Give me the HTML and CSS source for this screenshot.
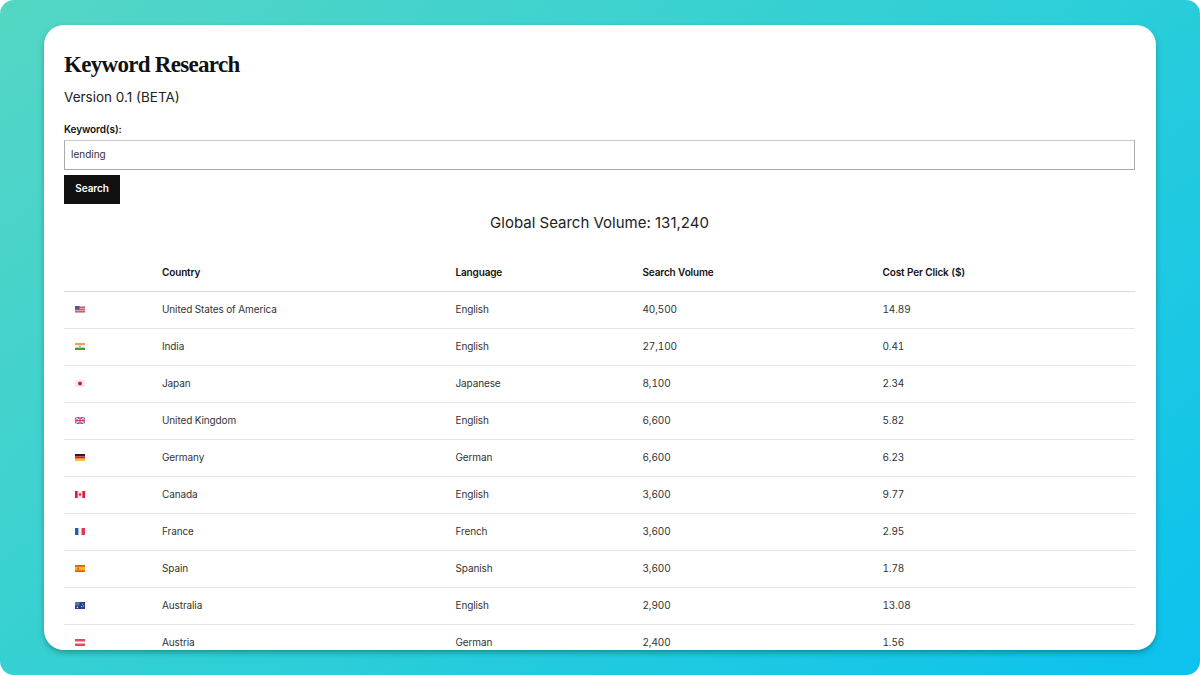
FILE: index.html
```html
<!DOCTYPE html>
<html lang="en">
<head>
    <meta charset="UTF-8">
    <meta name="viewport" content="width=device-width, initial-scale=1.0">
    <title>Keyword Research</title>
    <link rel="stylesheet" href="styles.css">
</head>
<body>
    <div class="frame">
        <main class="card">
            <h1 class="title">Keyword Research</h1>
            <p class="version">Version 0.1 (BETA)</p>
            <label class="field-label" for="keywords">Keyword(s):</label>
            <input class="field" id="keywords" type="text" value="lending">
            <button class="search">Search</button>
            <h2 class="total">Global Search Volume: 131,240</h2>
            <table class="results">
                <thead>
                    <tr>
                        <th class="col-flag"></th>
                        <th class="col-country">Country</th>
                        <th class="col-language">Language</th>
                        <th class="col-volume">Search Volume</th>
                        <th>Cost Per Click ($)</th>
                    </tr>
                </thead>
                <tbody>
                    <tr>
                        <td><svg class="flag" viewBox="0 0 10 7"><rect width="10" height="7" fill="#e8a0ac"/><path d="M0 1.5h10M0 3.5h10M0 5.5h10" stroke="#d9506a" stroke-width=".9"/><rect width="4.5" height="3.5" fill="#4a5a9c"/></svg></td>
                        <td>United States of America</td><td>English</td><td>40,500</td><td>14.89</td>
                    </tr>
                    <tr>
                        <td><svg class="flag" viewBox="0 0 10 7"><rect width="10" height="2.4" fill="#f0a050"/><rect y="2.4" width="10" height="2.3" fill="#f4f0ea"/><rect y="4.7" width="10" height="2.3" fill="#3f9a3f"/><circle cx="5" cy="3.5" r=".8" fill="#7c7ca8"/></svg></td>
                        <td>India</td><td>English</td><td>27,100</td><td>0.41</td>
                    </tr>
                    <tr>
                        <td><svg class="flag" viewBox="0 0 10 7"><rect width="10" height="7" fill="#f8e6ea"/><circle cx="5" cy="3.5" r="1.9" fill="#c4144a"/></svg></td>
                        <td>Japan</td><td>Japanese</td><td>8,100</td><td>2.34</td>
                    </tr>
                    <tr>
                        <td><svg class="flag" viewBox="0 0 10 7"><rect width="10" height="7" fill="#4a5590"/><path d="M0 0l10 7M10 0L0 7" stroke="#efdde2" stroke-width="1.3"/><path d="M5 0v7M0 3.5h10" stroke="#efdde2" stroke-width="2.2"/><path d="M5 0v7M0 3.5h10" stroke="#d03a5c" stroke-width="1.2"/></svg></td>
                        <td>United Kingdom</td><td>English</td><td>6,600</td><td>5.82</td>
                    </tr>
                    <tr>
                        <td><svg class="flag" viewBox="0 0 10 7"><rect width="10" height="2.4" fill="#222"/><rect y="2.4" width="10" height="2.3" fill="#d8261c"/><rect y="4.7" width="10" height="2.3" fill="#f6c21c"/></svg></td>
                        <td>Germany</td><td>German</td><td>6,600</td><td>6.23</td>
                    </tr>
                    <tr>
                        <td><svg class="flag" viewBox="0 0 10 7"><rect width="10" height="7" fill="#f8e4e6"/><rect width="2.6" height="7" fill="#dc1a3a"/><rect x="7.4" width="2.6" height="7" fill="#dc1a3a"/><circle cx="5" cy="3.5" r="1.2" fill="#dc1a3a"/></svg></td>
                        <td>Canada</td><td>English</td><td>3,600</td><td>9.77</td>
                    </tr>
                    <tr>
                        <td><svg class="flag" viewBox="0 0 10 7"><rect width="10" height="7" fill="#f6f0f2"/><rect width="3.4" height="7" fill="#2a5ca8"/><rect x="6.6" width="3.4" height="7" fill="#e23a4c"/></svg></td>
                        <td>France</td><td>French</td><td>3,600</td><td>2.95</td>
                    </tr>
                    <tr>
                        <td><svg class="flag" viewBox="0 0 10 7"><rect width="10" height="7" fill="#d8641c"/><rect y="1.8" width="10" height="3.4" fill="#f2b820"/><rect x="2.4" y="2.6" width="1.6" height="1.8" fill="#b85a20"/></svg></td>
                        <td>Spain</td><td>Spanish</td><td>3,600</td><td>1.78</td>
                    </tr>
                    <tr>
                        <td><svg class="flag" viewBox="0 0 10 7"><rect width="10" height="7" fill="#23408e"/><rect width="4.5" height="3.5" fill="#6a6ea8"/><circle cx="7.5" cy="2" r=".6" fill="#e8ecf6"/><circle cx="8.5" cy="4" r=".6" fill="#e8ecf6"/><circle cx="6.6" cy="4.6" r=".6" fill="#e8ecf6"/><circle cx="2.4" cy="5.3" r=".8" fill="#e8ecf6"/></svg></td>
                        <td>Australia</td><td>English</td><td>2,900</td><td>13.08</td>
                    </tr>
                    <tr>
                        <td><svg class="flag" viewBox="0 0 10 7"><rect width="10" height="7" fill="#e0485c"/><rect y="2.4" width="10" height="2.2" fill="#f8eef0"/></svg></td>
                        <td>Austria</td><td>German</td><td>2,400</td><td>1.56</td>
                    </tr>
                </tbody>
            </table>
        </main>
    </div>
</body>
</html>
```

FILE: styles.css
```css
* {
    margin: 0;
    padding: 0;
    box-sizing: border-box;
}

body {
    background-color: #fff;
    font-family: "Inter", "Liberation Sans", sans-serif;
    color: #111;
}

.frame {
    width: 1200px;
    height: 675px;
    padding: 25px 44px;
    border-radius: 14px;
    overflow: hidden;
    background: linear-gradient(140deg, #55d6c4 0%, #2fcfd6 50%, #0bc2ee 100%);
}

.card {
    height: 625px;
    padding: 25px 21px 0 20px;
    overflow: hidden;
    background-color: #fff;
    border-radius: 20px;
    box-shadow: 0 3px 6px -1px rgba(0, 0, 0, 0.35);
}

.title {
    font-family: "Liberation Serif", serif;
    font-size: 23px;
    line-height: 30px;
    font-weight: bold;
    letter-spacing: -0.7px;
}

.version {
    margin-top: 7px;
    font-size: 13.5px;
    line-height: 20px;
    color: #222;
}

.field-label {
    display: block;
    margin-top: 15px;
    font-size: 10px;
    line-height: 14px;
    font-weight: 600;
    letter-spacing: -0.1px;
}

.field {
    display: block;
    width: 100%;
    height: 30px;
    margin-top: 4px;
    padding: 0 6px 2px;
    border: 1px solid #aaa;
    border-top-color: #c8c8c8;
    font-family: inherit;
    font-size: 10px;
    color: #333;
}

.search {
    display: block;
    width: 56px;
    height: 29px;
    margin-top: 5px;
    padding-bottom: 3px;
    border: none;
    background-color: #111;
    color: #fff;
    font-family: inherit;
    font-size: 10px;
    font-weight: 600;
    letter-spacing: -0.1px;
}

.total {
    margin-top: 9px;
    font-size: 15px;
    line-height: 20px;
    font-weight: 400;
    text-align: center;
    color: #222;
}

.results {
    width: 100%;
    margin-top: 20px;
    border-collapse: collapse;
    table-layout: fixed;
    font-size: 10px;
    font-variant-numeric: tabular-nums;
    letter-spacing: -0.12px;
    color: #333;
}

.results th,
.results td {
    padding: 0;
    text-align: left;
    vertical-align: middle;
    border-bottom: 1px solid #e4e4e4;
}

.results th {
    height: 38px;
    font-weight: 600;
    letter-spacing: -0.15px;
    color: #111;
    border-bottom-color: #dcdcdc;
}

.results td {
    height: 37px;
    padding-bottom: 1px;
}

.col-flag {
    width: 98px;
}

.col-country {
    width: 293.5px;
}

.col-language {
    width: 187px;
}

.col-volume {
    width: 240px;
}

.flag {
    display: block;
    width: 10px;
    height: 7px;
    margin-left: 11px;
}
```
